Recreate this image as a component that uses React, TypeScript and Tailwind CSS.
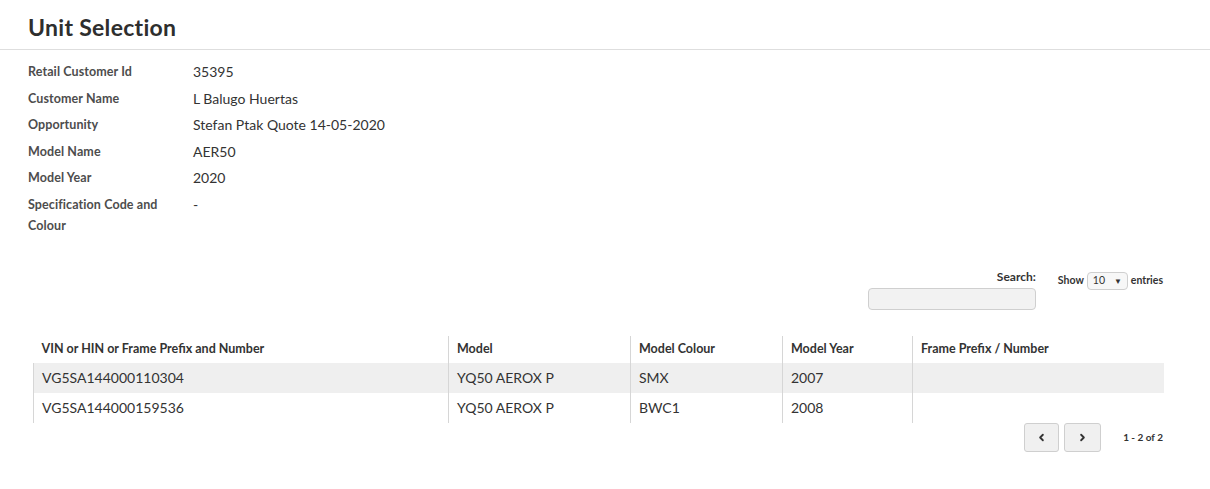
import * as React from 'react';
import { ChevronLeft, ChevronRight } from 'lucide-react';

const details: [string, string][] = [
  ['Retail Customer Id', '35395'],
  ['Customer Name', 'L Balugo Huertas'],
  ['Opportunity', 'Stefan Ptak Quote 14-05-2020'],
  ['Model Name', 'AER50'],
  ['Model Year', '2020'],
  ['Specification Code and Colour', '-'],
];

const columns = [
  { label: 'VIN or HIN or Frame Prefix and Number', width: 'w-[415px]' },
  { label: 'Model', width: 'w-[182px]' },
  { label: 'Model Colour', width: 'w-[152px]' },
  { label: 'Model Year', width: 'w-[130px]' },
  { label: 'Frame Prefix / Number', width: 'w-[251px]' },
];

const units = [
  ['VG5SA144000110304', 'YQ50 AEROX P', 'SMX', '2007', ''],
  ['VG5SA144000159536', 'YQ50 AEROX P', 'BWC1', '2008', ''],
];

export default function App() {
  return (
    <div className="min-h-[489px] bg-white text-[#333] font-['Lato','Open_Sans',sans-serif]">
      <div className="h-[50px] border-b border-[#dedede] px-[28px] pt-[5px] flex items-center">
        <h1 className="text-[23px] font-bold text-[#2e2e2e] tracking-[0.3px]">Unit Selection</h1>
      </div>

      <dl className="mt-[11px] px-[28px] grid grid-cols-[165px_1fr] gap-y-[5.5px]">
        {details.map(([label, value]) => (
          <React.Fragment key={label}>
            <dt className="text-[12.5px] font-bold leading-[21px] text-[#4d4d4d] w-[140px] tracking-[0.1px]">{label}</dt>
            <dd className="text-[14px] leading-[21px] text-[#333]">{value}</dd>
          </React.Fragment>
        ))}
      </dl>

      <div className="mt-[33px] pr-[47px] flex justify-end items-start">
        <div className="flex flex-col items-end">
          <label className="text-[12px] font-bold leading-[16px] text-[#333]">Search:</label>
          <input
            type="text"
            className="mt-[3px] w-[168px] h-[22px] rounded-[4px] border border-[#cfcfcf] bg-[#f2f2f2]"
          />
        </div>
        <div className="ml-[22px] mt-[3px] flex items-center gap-[3px] text-[10.5px] font-bold text-[#333]">
          <span>Show</span>
          <span className="flex items-center justify-between w-[41px] h-[18px] px-[5px] rounded-[4px] border border-[#cfcfcf] bg-[#f7f7f7] font-normal">
            <span>10</span>
            <span className="text-[8px]">▼</span>
          </span>
          <span>entries</span>
        </div>
      </div>

      <div className="mt-[26px] pl-[33px] pr-[47px]">
        <table className="w-[1130px] table-fixed border-collapse">
          <thead>
            <tr className="h-[27px]">
              {columns.map((c, i) => (
                <th
                  key={c.label}
                  className={`${c.width} text-left align-middle text-[12.5px] font-bold text-[#333] ${i === 0 ? 'pl-[8px]' : 'pl-[8px] border-l border-[#d6d6d6]'}`}
                >
                  {c.label}
                </th>
              ))}
            </tr>
          </thead>
          <tbody>
            {units.map((row, r) => (
              <tr key={row[0]} className={`h-[30px] ${r === 0 ? 'bg-[#efefef]' : 'bg-white'}`}>
                {row.map((cell, i) => (
                  <td key={i} className="pl-[8px] text-[14px] text-[#333] border-l border-[#d6d6d6] align-middle">
                    {cell}
                  </td>
                ))}
              </tr>
            ))}
          </tbody>
        </table>

        <div className="flex justify-end items-center">
          <button className="w-[35px] h-[29px] flex items-center justify-center rounded-[3px] border border-[#cfcfcf] bg-[#f0f0f0] text-[#333]">
            <ChevronLeft size={11} strokeWidth={4} />
          </button>
          <button className="ml-[5px] w-[37px] h-[29px] flex items-center justify-center rounded-[3px] border border-[#cfcfcf] bg-[#f0f0f0] text-[#333]">
            <ChevronRight size={11} strokeWidth={4} />
          </button>
          <span className="ml-[22px] text-[10px] font-bold text-[#333]">1 - 2 of 2</span>
        </div>
      </div>
    </div>
  );
}
